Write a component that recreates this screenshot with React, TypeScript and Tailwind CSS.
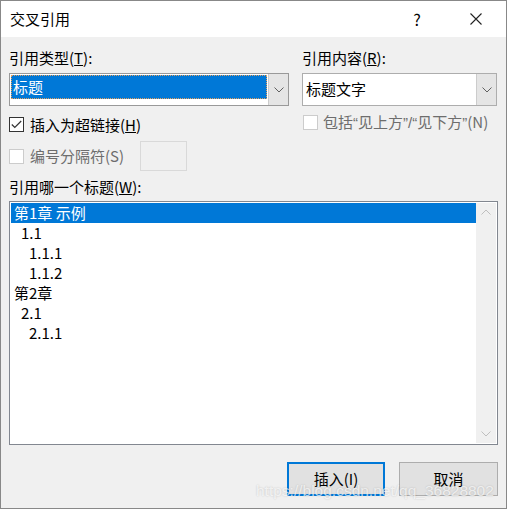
import React from 'react';

const FONT = { fontFamily: '"Microsoft YaHei UI", "Noto Sans CJK SC", "Noto Sans", sans-serif' };
const LATIN = { fontFamily: '"Liberation Sans", Arial, sans-serif' };

const Chevron: React.FC<{ up?: boolean; color?: string }> = ({ up, color = '#606060' }) => (
  <svg width="10" height="6" viewBox="0 0 10 6">
    <path
      d={up ? 'M0.5 5.5 L5 1 L9.5 5.5' : 'M0.5 0.5 L5 5 L9.5 0.5'}
      fill="none"
      stroke={color}
      strokeWidth="1"
    />
  </svg>
);

const Check: React.FC<{ checked?: boolean; disabled?: boolean }> = ({ checked, disabled }) => (
  <div
    className={`w-[15px] h-[15px] shrink-0 border bg-white flex items-center justify-center ${
      disabled ? 'border-[#cccccc]' : 'border-[#333333]'
    }`}
  >
    {checked && (
      <svg width="11" height="9" viewBox="0 0 11 9">
        <path d="M0.8 4.5 L3.8 7.5 L10.2 1" fill="none" stroke="#333" strokeWidth="1.2" />
      </svg>
    )}
  </div>
);

const items = [
  { label: '第1章 示例', indent: 'pl-[3px]', selected: true },
  { label: '1.1', indent: 'pl-[10px]' },
  { label: '1.1.1', indent: 'pl-[18px]' },
  { label: '1.1.2', indent: 'pl-[18px]' },
  { label: '第2章', indent: 'pl-[3px]' },
  { label: '2.1', indent: 'pl-[10px]' },
  { label: '2.1.1', indent: 'pl-[18px]' },
];

export default function App() {
  return (
    <div
      style={FONT}
      className="relative w-[507px] h-[509px] flex flex-col border border-[#888888] bg-[#f0f0f0] text-[15px] text-black overflow-hidden"
    >
      {/* title bar */}
      <div className="h-[36px] bg-white flex items-center pl-[9px] shrink-0">
        <span className="flex-1 leading-[20px]">交叉引用</span>
        <span className="w-[20px] text-center text-[16px] mr-[43px] leading-[20px]">?</span>
        <svg width="12" height="12" viewBox="0 0 12 12" className="mr-[24px]">
          <path d="M0.5 0.5 L11.5 11.5 M11.5 0.5 L0.5 11.5" stroke="#222" strokeWidth="1.1" />
        </svg>
      </div>

      <div className="flex-1 px-[8px] pt-[12px]">
        <div className="grid grid-cols-[280px_195px] gap-x-[13px]">
          <div className="leading-[18px] h-[18px]">
            引用类型(<span className="underline">T</span>):
          </div>
          <div className="leading-[18px] h-[18px]">
            引用内容(<span className="underline">R</span>):
          </div>

          {/* left combo */}
          <div className="mt-[6px] h-[33px] border border-[#999999] bg-white flex">
            <div className="flex-1 m-[1px] bg-[#0078d7] outline-1 outline-dotted outline-[#e0a060] -outline-offset-1 text-white flex items-center pl-[2px] h-[24px]">
              标题
            </div>
            <div className="w-[20px] bg-[#e5e5e5] border-l border-[#cccccc] flex items-center justify-center">
              <Chevron />
            </div>
          </div>

          {/* right combo */}
          <div className="mt-[6px] h-[33px] border border-[#adadad] bg-white flex">
            <div className="flex-1 flex items-center pl-[3px]">标题文字</div>
            <div className="w-[20px] bg-[#e5e5e5] border-l border-[#cccccc] flex items-center justify-center">
              <Chevron />
            </div>
          </div>

          <div className="mt-[11px] flex items-center gap-[6px] h-[15px]">
            <Check checked />
            <span className="leading-[18px] whitespace-nowrap">
              插入为超链接(<span className="underline">H</span>)
            </span>
          </div>
          <div className="mt-[9px] flex items-center gap-[5px] h-[15px] pl-[1px]">
            <Check disabled />
            <span className="leading-[18px] text-[#6d6d6d] whitespace-nowrap">
              包括<span style={LATIN}>“</span>见上方<span style={LATIN}>”/“</span>见下方
              <span style={LATIN}>”</span>(N)
            </span>
          </div>
        </div>

        <div className="mt-[9px] flex items-center h-[30px]">
          <div className="flex items-center gap-[6px]">
            <Check disabled />
            <span className="leading-[18px] text-[#6d6d6d]">编号分隔符(S)</span>
          </div>
          <div className="ml-[16px] w-[47px] h-[30px] border border-[#d9d9d9] bg-[#f0f0f0]" />
        </div>

        <div className="mt-[7px] leading-[18px] h-[18px]">
          引用哪一个标题(<span className="underline">W</span>):
        </div>

        {/* list box */}
        <div className="mt-[5px] w-[489px] h-[244px] border border-[#828790] bg-white flex p-[1px]">
          <div className="flex-1 flex flex-col">
            {items.map((it) => (
              <div
                key={it.label}
                className={`h-[20px] leading-[20px] ${it.indent} ${
                  it.selected ? 'bg-[#0078d7] text-white' : ''
                }`}
              >
                {it.label}
              </div>
            ))}
          </div>
          <div className="w-[20px] bg-[#f0f0f0] flex flex-col justify-between items-center py-[6px]">
            <Chevron up color="#bfbfbf" />
            <Chevron color="#bfbfbf" />
          </div>
        </div>

        {/* buttons */}
        <div className="mt-[17px] flex justify-end gap-[14px]">
          <button className="w-[98px] h-[34px] border-2 border-[#0078d7] bg-[#e1e1e1] leading-[18px]">
            插入(I)
          </button>
          <button className="w-[99px] h-[34px] border border-[#adadad] bg-[#e1e1e1] leading-[18px]">
            取消
          </button>
        </div>
      </div>

      {/* watermark */}
      <div
        style={LATIN}
        className="absolute left-[255px] top-[481px] text-[15.5px] text-white/70 leading-[18px] whitespace-nowrap [text-shadow:0_0_2px_rgba(0,0,0,0.2)]"
      >
        https://blog.csdn.net/qq_36828802
      </div>
    </div>
  );
}
